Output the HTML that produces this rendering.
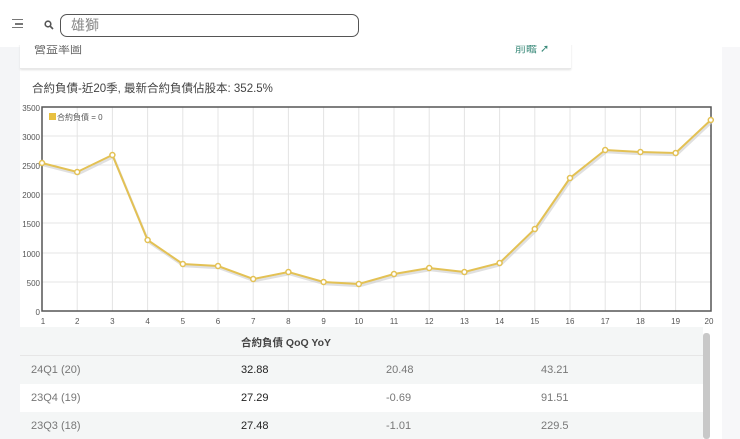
<!DOCTYPE html>
<html><head><meta charset="utf-8"><style>
*{margin:0;padding:0;box-sizing:border-box}
body{width:740px;height:439px;overflow:hidden;background:#fff;font-family:"Liberation Sans","Noto Sans CJK TC",sans-serif;position:relative}
.gl{position:absolute;left:0;top:47px;width:20px;height:392px;background:#f4f5f7}
.gr{position:absolute;left:722px;top:47px;width:18px;height:392px;background:#f7f7f9}
.top{position:absolute;left:0;top:0;width:740px;height:45px;background:#fff;z-index:5}
.search{position:absolute;left:60px;top:14px;width:299px;height:23px;border:1.5px solid #555;border-radius:7px;font-size:14px;color:#888;padding:2px 10px;line-height:17px;z-index:6;background:#fff}
.card1{position:absolute;left:20px;top:40px;width:551px;height:29px;border-bottom:1px solid #e8e8e8;box-shadow:0 1px 2px #e0e0e0;background:#fff}
.t{position:absolute;font-size:11px;color:#444}
.tbl div{position:absolute;font-size:11px}
</style></head><body>
<div class="top"></div>
<div style="position:absolute;left:12px;top:19px;width:11px;height:9px;border-top:1.5px solid #777;border-bottom:1.5px solid #777;z-index:6"></div>
<div style="position:absolute;left:15px;top:23px;width:8px;height:1.5px;background:#777;z-index:6"></div>
<svg style="position:absolute;left:44px;top:20px;z-index:6" width="10" height="10"><circle cx="4" cy="4" r="2.8" fill="none" stroke="#555" stroke-width="1.6"/><line x1="6" y1="6" x2="9" y2="9" stroke="#555" stroke-width="1.6"/></svg>
<div class="search">雄獅</div>
<div class="gl"></div><div class="gr"></div>
<div class="card1"><div style="position:absolute;left:14px;top:0px;font-size:12px;color:#666">營益率圖</div><div style="position:absolute;left:495px;top:0px;font-size:11px;color:#3a8a7a">前瞻 ➚</div></div>
<div style="position:absolute;left:20px;top:72px;width:700px;height:367px;background:#fff"></div>
<div class="t" style="left:32px;top:80px;font-size:11.5px">合約負債-近20季, 最新合約負債佔股本: 352.5%</div>
<svg style="position:absolute;left:0;top:0" width="740" height="330" font-family="Liberation Sans" font-size="8" fill="#555">
<g stroke="#e4e4e4" stroke-width="1">
<line x1="42" y1="136" x2="711" y2="136"/><line x1="42" y1="165" x2="711" y2="165"/><line x1="42" y1="194" x2="711" y2="194"/><line x1="42" y1="223" x2="711" y2="223"/><line x1="42" y1="253" x2="711" y2="253"/><line x1="42" y1="282" x2="711" y2="282"/>
<line x1="77.2" y1="107" x2="77.2" y2="311"/><line x1="112.4" y1="107" x2="112.4" y2="311"/><line x1="147.6" y1="107" x2="147.6" y2="311"/><line x1="182.8" y1="107" x2="182.8" y2="311"/><line x1="218" y1="107" x2="218" y2="311"/><line x1="253.2" y1="107" x2="253.2" y2="311"/><line x1="288.4" y1="107" x2="288.4" y2="311"/><line x1="323.6" y1="107" x2="323.6" y2="311"/><line x1="358.8" y1="107" x2="358.8" y2="311"/><line x1="394" y1="107" x2="394" y2="311"/><line x1="429.2" y1="107" x2="429.2" y2="311"/><line x1="464.4" y1="107" x2="464.4" y2="311"/><line x1="499.6" y1="107" x2="499.6" y2="311"/><line x1="534.8" y1="107" x2="534.8" y2="311"/><line x1="570" y1="107" x2="570" y2="311"/><line x1="605.2" y1="107" x2="605.2" y2="311"/><line x1="640.4" y1="107" x2="640.4" y2="311"/><line x1="675.6" y1="107" x2="675.6" y2="311"/>
</g>
<rect x="42" y="107" width="669" height="204" fill="none" stroke="#555" stroke-width="1.5"/>
<g text-anchor="end"><text x="40" y="111">3500</text><text x="40" y="140">3000</text><text x="40" y="169">2500</text><text x="40" y="198">2000</text><text x="40" y="227">1500</text><text x="40" y="257">1000</text><text x="40" y="286">500</text><text x="40" y="315">0</text></g>
<g text-anchor="middle"><text x="43" y="324">1</text><text x="77.2" y="324">2</text><text x="112.4" y="324">3</text><text x="147.6" y="324">4</text><text x="182.8" y="324">5</text><text x="218" y="324">6</text><text x="253.2" y="324">7</text><text x="288.4" y="324">8</text><text x="323.6" y="324">9</text><text x="358.8" y="324">10</text><text x="394" y="324">11</text><text x="429.2" y="324">12</text><text x="464.4" y="324">13</text><text x="499.6" y="324">14</text><text x="534.8" y="324">15</text><text x="570" y="324">16</text><text x="605.2" y="324">17</text><text x="640.4" y="324">18</text><text x="675.6" y="324">19</text><text x="709" y="324">20</text></g>
<rect x="49" y="113" width="7" height="7" fill="#e8c040"/><text x="57" y="120" fill="#555">合約負債 = 0</text>
<polyline fill="none" stroke="#ccc" stroke-width="2.5" opacity="0.6" transform="translate(1,2)" points="42,163 77.2,172 112.4,155 147.6,240 182.8,264 218,266 253.2,279 288.4,272 323.6,282 358.8,284 394,274 429.2,268 464.4,272 499.6,263 534.8,229 570,178 605.2,150 640.4,152 675.6,153 710.8,120"/>
<polyline fill="none" stroke="#e3c154" stroke-width="2" points="42,163 77.2,172 112.4,155 147.6,240 182.8,264 218,266 253.2,279 288.4,272 323.6,282 358.8,284 394,274 429.2,268 464.4,272 499.6,263 534.8,229 570,178 605.2,150 640.4,152 675.6,153 710.8,120"/>
<g fill="#fff" stroke="#e3c154" stroke-width="1.5"><circle cx="42" cy="163" r="2.5"/><circle cx="77.2" cy="172" r="2.5"/><circle cx="112.4" cy="155" r="2.5"/><circle cx="147.6" cy="240" r="2.5"/><circle cx="182.8" cy="264" r="2.5"/><circle cx="218" cy="266" r="2.5"/><circle cx="253.2" cy="279" r="2.5"/><circle cx="288.4" cy="272" r="2.5"/><circle cx="323.6" cy="282" r="2.5"/><circle cx="358.8" cy="284" r="2.5"/><circle cx="394" cy="274" r="2.5"/><circle cx="429.2" cy="268" r="2.5"/><circle cx="464.4" cy="272" r="2.5"/><circle cx="499.6" cy="263" r="2.5"/><circle cx="534.8" cy="229" r="2.5"/><circle cx="570" cy="178" r="2.5"/><circle cx="605.2" cy="150" r="2.5"/><circle cx="640.4" cy="152" r="2.5"/><circle cx="675.6" cy="153" r="2.5"/><circle cx="710.8" cy="120" r="2.5"/></g>
</svg>
<div class="tbl">
<div style="left:20px;top:327px;width:683px;height:28px;background:#f4f6f6"></div>
<div style="left:20px;top:355px;width:683px;height:29px;background:#f4f6f6"></div>
<div style="left:20px;top:384px;width:683px;height:28px;background:#fff"></div>
<div style="left:20px;top:412px;width:683px;height:27px;background:#f4f6f6"></div>
<div style="left:20px;top:355px;width:683px;height:1px;background:#e6e6e6"></div>
<div style="left:703px;top:333px;width:7px;height:106px;background:#c8c8c8;border-radius:3px"></div>
<div style="left:241px;top:335px;color:#444;font-weight:bold;font-size:10.5px">合約負債 QoQ YoY</div>
<div style="left:31px;top:364px;color:#777">24Q1 (20)</div><div style="left:241px;top:364px;color:#222">32.88</div><div style="left:386px;top:364px;color:#777">20.48</div><div style="left:541px;top:364px;color:#777">43.21</div>
<div style="left:31px;top:392px;color:#777">23Q4 (19)</div><div style="left:241px;top:392px;color:#222">27.29</div><div style="left:386px;top:392px;color:#777">-0.69</div><div style="left:541px;top:392px;color:#777">91.51</div>
<div style="left:31px;top:420px;color:#777">23Q3 (18)</div><div style="left:241px;top:420px;color:#222">27.48</div><div style="left:386px;top:420px;color:#777">-1.01</div><div style="left:541px;top:420px;color:#777">229.5</div>
</div>
</body></html>
